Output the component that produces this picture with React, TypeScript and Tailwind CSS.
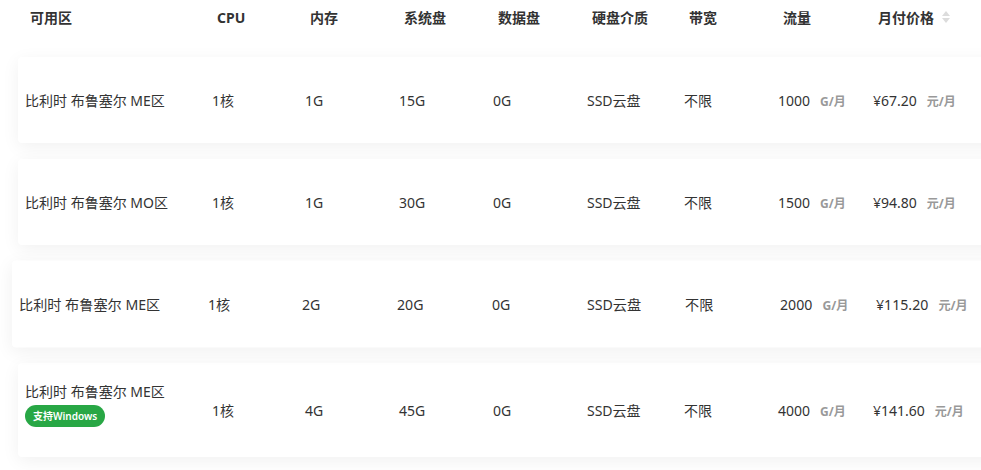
const font = { fontFamily: '"Noto Sans", "Noto Sans CJK SC", sans-serif' }

interface Plan {
  zone: string
  cpu: string
  mem: string
  sys: string
  data: string
  disk: string
  bw: string
  traffic: string
  price: string
  windows?: boolean
  hover?: boolean
}

const plans: Plan[] = [
  { zone: '比利时 布鲁塞尔 ME区', cpu: '1核', mem: '1G', sys: '15G', data: '0G', disk: 'SSD云盘', bw: '不限', traffic: '1000', price: '¥67.20' },
  { zone: '比利时 布鲁塞尔 MO区', cpu: '1核', mem: '1G', sys: '30G', data: '0G', disk: 'SSD云盘', bw: '不限', traffic: '1500', price: '¥94.80' },
  { zone: '比利时 布鲁塞尔 ME区', cpu: '1核', mem: '2G', sys: '20G', data: '0G', disk: 'SSD云盘', bw: '不限', traffic: '2000', price: '¥115.20', hover: true },
  { zone: '比利时 布鲁塞尔 ME区', cpu: '1核', mem: '4G', sys: '45G', data: '0G', disk: 'SSD云盘', bw: '不限', traffic: '4000', price: '¥141.60', windows: true },
]

const headers = ['可用区', 'CPU', '内存', '系统盘', '数据盘', '硬盘介质', '带宽', '流量', '月付价格']
const widths = ['w-[187px]', 'w-[93px]', 'w-[94px]', 'w-[94px]', 'w-[94px]', 'w-[97px]', 'w-[94px]', 'w-[95px]', 'w-[200px]']

function SortIcon() {
  return (
    <svg width="10" height="16" viewBox="0 0 10 16" className="ml-[7px]">
      <path d="M5 2 L9 7 L1 7 Z" fill="#dcdcdc" />
      <path d="M5 14 L9 9 L1 9 Z" fill="#dcdcdc" />
    </svg>
  )
}

function Row({ p }: { p: Plan }) {
  const cells = [p.cpu, p.mem, p.sys, p.data, p.disk, p.bw]
  return (
    <div
      className={`flex items-center w-[1146px] bg-white rounded-[4px] shadow-[0_4px_18px_rgba(0,0,0,0.06)] text-[14px] text-[#333] ${
        p.windows ? 'h-[94px]' : 'h-[86px]'
      } ${p.hover ? 'scale-[1.0106] origin-[573px_50%]' : ''}`}
    >
      <div className={`${widths[0]} pl-[7px] shrink-0 ${p.windows ? 'pb-[12px]' : ''}`}>
        <div>{p.zone}</div>
        {p.windows && (
          <span className="mt-[3px] inline-flex items-center h-[22px] px-[8px] rounded-full bg-[#28a745] text-white text-[10px] font-semibold">
            支持Windows
          </span>
        )}
      </div>
      {cells.map((c, i) => (
        <div key={i} className={`${widths[i + 1]} pl-[7px] shrink-0`}>{c}</div>
      ))}
      <div className={`${widths[7]} pl-[7px] shrink-0 flex items-baseline`}>
        <span>{p.traffic}</span>
        <span className="ml-[10px] text-[12px] font-bold text-[#999]">G/月</span>
      </div>
      <div className={`${widths[8]} pl-[7px] shrink-0 flex items-baseline`}>
        <span>{p.price}</span>
        <span className="ml-[10px] text-[12px] font-bold text-[#999]">元/月</span>
      </div>
    </div>
  )
}

export default function App() {
  return (
    <div className="w-[981px] h-[470px] overflow-hidden bg-white" style={font}>
      <div className="flex items-center h-[50px] ml-[18px] pb-[16px] text-[14px] font-bold text-[#333]">
        {headers.map((h, i) => (
          <div key={h} className={`${widths[i]} pl-[12px] shrink-0 flex items-center`}>
            {h}
            {i === 8 && <SortIcon />}
          </div>
        ))}
      </div>
      <div className="flex flex-col gap-[16px] pl-[18px] pt-[7px]">
        {plans.map((p, i) => (
          <Row key={i} p={p} />
        ))}
      </div>
    </div>
  )
}
